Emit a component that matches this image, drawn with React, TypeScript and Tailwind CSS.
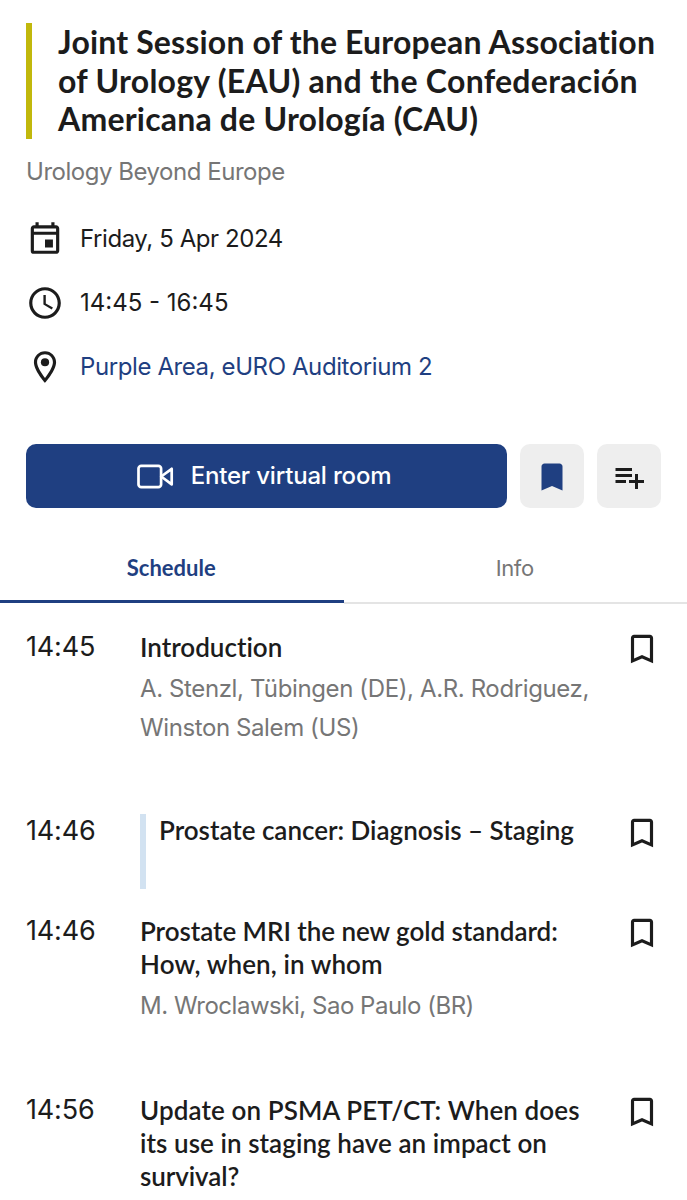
import type { ReactNode } from "react";
import {
  MdAccessTime,
  MdBookmark,
  MdBookmarkBorder,
  MdOutlineEvent,
  MdPlaylistAdd,
} from "react-icons/md";

type Line = { text: string; className?: string };

type Talk = {
  time: string;
  title: Line[];
  speakers?: Line[];
  isSection?: boolean;
  className: string;
};

const heading: Line[] = [
  { text: "Joint Session of the European Association", className: "tracking-[0.16px]" },
  { text: "of Urology (EAU) and the Confederación", className: "tracking-[0.28px]" },
  { text: "Americana de Urología (CAU)", className: "tracking-[0.2px]" },
];

const talks: Talk[] = [
  {
    time: "14:45",
    title: [{ text: "Introduction" }],
    speakers: [
      { text: "A. Stenzl, Tübingen (DE), A.R. Rodriguez,", className: "tracking-[-0.38px]" },
      { text: "Winston Salem (US)", className: "tracking-[-0.4px]" },
    ],
    className: "h-[184px]",
  },
  {
    time: "14:46",
    title: [{ text: "Prostate cancer: Diagnosis – Staging", className: "tracking-[-0.02px]" }],
    isSection: true,
    className: "h-[100px]",
  },
  {
    time: "14:46",
    title: [
      { text: "Prostate MRI the new gold standard:", className: "tracking-[-0.05px]" },
      { text: "How, when, in whom", className: "tracking-[0.1px]" },
    ],
    speakers: [{ text: "M. Wroclawski, Sao Paulo (BR)", className: "tracking-[-0.48px]" }],
    className: "h-[179px]",
  },
  {
    time: "14:56",
    title: [
      { text: "Update on PSMA PET/CT: When does", className: "tracking-[0.11px]" },
      { text: "its use in staging have an impact on", className: "tracking-[0.06px]" },
      { text: "survival?", className: "tracking-[-0.1px]" },
    ],
    className: "h-[110px]",
  },
];

function Lines({ lines }: { lines: Line[] }) {
  return (
    <>
      {lines.map((line) => (
        <span key={line.text} className="block whitespace-nowrap">
          <span className={line.className}>{line.text}</span>
        </span>
      ))}
    </>
  );
}

function DetailRow({ icon, children }: { icon: ReactNode; children: ReactNode }) {
  return (
    <div className="flex h-16 items-center gap-4 text-2xl">
      {icon}
      {children}
    </div>
  );
}

function PinIcon() {
  return (
    <svg className="size-[38px]" viewBox="0 0 24 24" fill="currentColor">
      <path d="M12 2C8.13 2 5 5.13 5 9c0 5.25 7 13 7 13s7-7.75 7-13c0-3.87-3.13-7-7-7zM7 9c0-2.76 2.24-5 5-5s5 2.24 5 5c0 2.88-2.88 7.19-5 9.88C9.92 16.21 7 11.85 7 9z" />
      <circle cx="12" cy="9" r="2.6" />
    </svg>
  );
}

function VideoIcon() {
  return (
    <svg width="38" height="26" viewBox="0 0 38 26" fill="none" stroke="currentColor" strokeWidth="2.7" strokeLinejoin="round">
      <rect x="2.5" y="2.8" width="22.6" height="21.4" rx="2.8" />
      <path d="M25.2 13.5 35.7 5.8v15.6z" />
    </svg>
  );
}

function TalkRow({ talk }: { talk: Talk }) {
  return (
    <li className={`flex ${talk.className}`}>
      <div className="mt-[-1px] w-[114px] shrink-0 text-[27px] leading-[33px] tracking-[-0.15px]">{talk.time}</div>
      <div className={`min-w-0 flex-1 ${talk.isSection ? "mt-[-1px] h-[75px] border-l-[6px] border-[#d2e2f1] pl-[13px]" : ""}`}>
        <h3 className="font-[Lato,sans-serif] text-[26px] leading-[33px] font-semibold [font-variant-ligatures:none]">
          <Lines lines={talk.title} />
        </h3>
        {talk.speakers && (
          <p className="mt-[5px] text-2xl leading-[39px] text-[#767676]">
            <Lines lines={talk.speakers} />
          </p>
        )}
      </div>
      <MdBookmarkBorder className="mt-[-1px] size-[38px] shrink-0" />
    </li>
  );
}

export default function App() {
  return (
    <main className="h-[1200px] w-full overflow-hidden bg-white pt-[23px] font-[Inter,sans-serif] text-[#1c1c1c]">
      <header className="px-[26px]">
        <h1 className="border-l-[6px] border-[#c1b80c] pl-[26px] font-[Lato,sans-serif] text-[32px] leading-[38.5px] font-bold [font-variant-ligatures:none]">
          <Lines lines={heading} />
        </h1>
        <p className="mt-[17px] text-2xl leading-8 tracking-[-0.47px] text-[#767676]">
          Urology Beyond Europe
        </p>

        <div className="mt-[19px]">
          <DetailRow icon={<MdOutlineEvent className="mt-[-1px] size-[38px]" />}>
            <span className="tracking-[-0.43px]">Friday, 5 Apr 2024</span>
          </DetailRow>
          <DetailRow icon={<MdAccessTime className="size-[38px]" />}>
            <span>14:45 - 16:45</span>
          </DetailRow>
          <DetailRow icon={<PinIcon />}>
            <span className="tracking-[-0.4px] text-[#1f3f81]">Purple Area, eURO Auditorium 2</span>
          </DetailRow>
        </div>

        <div className="mt-[45px] flex gap-[13px]">
          <button className="flex h-16 w-[481px] items-center justify-center gap-[17px] rounded-[10px] bg-[#1f3f81] pr-1.5 text-2xl font-medium text-white">
            <VideoIcon />
            <span className="tracking-[-0.18px]">Enter virtual room</span>
          </button>
          <button className="flex size-16 items-center justify-center rounded-[10px] bg-[#eeeeee] text-[#1f3f81]">
            <MdBookmark className="mt-0.5 size-9" />
          </button>
          <button className="flex size-16 items-center justify-center rounded-[10px] bg-[#eeeeee]">
            <MdPlaylistAdd className="mt-0.5 mr-px size-9" />
          </button>
        </div>
      </header>

      <nav className="mt-[27px] flex h-[69px] text-[22px] leading-[66px]">
        <div className="mb-[1px] w-1/2 border-b-[3px] border-[#1f3f81] pr-px text-center font-[Lato,sans-serif] font-bold text-[#1f3f81]">
          <span>Schedule</span>
        </div>
        <div className="w-1/2 border-b-2 border-[#e4e4e4] pr-px text-center tracking-[-0.4px] text-[#767676]">
          <span>Info</span>
        </div>
      </nav>

      <ul className="px-[26px] pt-[27px]">
        {talks.map((talk, i) => (
          <TalkRow key={i} talk={talk} />
        ))}
      </ul>
    </main>
  );
}
